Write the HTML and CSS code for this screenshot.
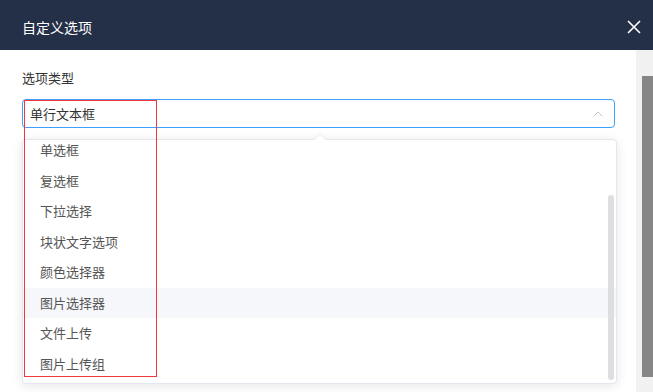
FILE: index.html
```html
<html>
<head>
    <link rel="stylesheet" href="styles.css">
</head>
<body>

<div class="dialog">
    <div class="dialog-head">
        <span class="dialog-title">自定义选项</span>
        <svg class="close" width="14" height="14" viewBox="0 0 14 14">
            <path d="M1 1 L13 13 M13 1 L1 13" stroke="#fff" stroke-width="1.6" fill="none"/>
        </svg>
    </div>

    <div class="dialog-main">
        <div class="dialog-body">
            <div class="field-label">选项类型</div>

            <div class="select-wrap">
                <div class="select">
                    <span class="select-value">单行文本框</span>
                    <svg class="select-arrow" width="10" height="6" viewBox="0 0 10 6">
                        <path d="M0.5 5.5 L5 1 L9.5 5.5" stroke="#c0c4cc" stroke-width="1" fill="none"/>
                    </svg>
                </div>

                <div class="dropdown">
                    <div class="dropdown-arrow"></div>
                    <ul class="options" id="options">
                        <li>单选框</li>
                        <li>复选框</li>
                        <li>下拉选择</li>
                        <li>块状文字选项</li>
                        <li>颜色选择器</li>
                        <li class="hover">图片选择器</li>
                        <li>文件上传</li>
                        <li>图片上传组</li>
                    </ul>
                    <div class="dropdown-thumb"></div>
                </div>

                <div class="mark"></div>
            </div>
        </div>

        <div class="page-scroll">
            <div class="page-thumb"></div>
        </div>
    </div>
</div>

<script>
    document.getElementById("options").scrollTop = 11;
</script>

</body>
</html>
```

FILE: styles.css
```css
body{
    margin: 0;
    font-family: "Noto Sans CJK SC", "Noto Sans", sans-serif;
    background-color: #fff;
}
.dialog{
    width: 653px;
    height: 392px;
    overflow: hidden;
}
.dialog-head{
    height: 50px;
    box-sizing: border-box;
    padding: 3px 12px 0 22px;
    background-color: #242f48;
    display: flex;
    align-items: center;
    justify-content: space-between;
}
.dialog-title{
    color: #fff;
    font-size: 14px;
}
.close{
    margin-top: 1px;
}
.dialog-main{
    display: flex;
    height: 342px;
}
.dialog-body{
    flex: 1;
    padding: 18px 21px 0 22px;
}
.field-label{
    font-size: 13px;
    line-height: 20px;
    color: #333;
    margin-bottom: 11px;
}
.select-wrap{
    position: relative;
}
.select{
    height: 29px;
    box-sizing: border-box;
    border: 1px solid #409eff;
    border-radius: 4px;
    padding: 0 11px 0 7px;
    display: flex;
    align-items: center;
    justify-content: space-between;
}
.select-value{
    font-size: 13px;
    color: #333;
}
.dropdown{
    position: absolute;
    top: 40px;
    left: 0;
    right: -2px;
    height: 245px;
    box-sizing: border-box;
    border: 1px solid #e4e7ed;
    border-radius: 4px;
    background-color: #fff;
    box-shadow: 0 2px 12px rgba(0,0,0,0.1);
}
.dropdown-arrow{
    position: absolute;
    top: -7px;
    left: 50%;
    margin-left: -6px;
    width: 0;
    height: 0;
    border-left: 6px solid transparent;
    border-right: 6px solid transparent;
    border-bottom: 6px solid #e4e7ed;
}
.dropdown-arrow:after{
    content: "";
    position: absolute;
    top: 1px;
    left: -6px;
    border-left: 6px solid transparent;
    border-right: 6px solid transparent;
    border-bottom: 6px solid #fff;
}
.options{
    list-style-type: none;
    margin: 0;
    padding: 6px 0;
    height: 243px;
    box-sizing: border-box;
    overflow: hidden;
}
.options li{
    height: 30.5px;
    line-height: 30.5px;
    padding: 0 17px;
    font-size: 13px;
    color: #555;
}
.options li.hover{
    background-color: #f5f7fa;
}
.dropdown-thumb{
    position: absolute;
    right: 2px;
    top: 55px;
    width: 6px;
    height: 185px;
    border-radius: 3px;
    background-color: #dddee0;
}
.mark{
    position: absolute;
    top: 1px;
    left: 2px;
    width: 133px;
    height: 277px;
    box-sizing: border-box;
    border: 1px solid #f2383a;
}
.page-scroll{
    width: 17px;
    background-color: #f1f1f1;
    padding-top: 26px;
    box-sizing: border-box;
}
.page-thumb{
    margin-left: 6px;
    width: 11px;
    height: 301px;
    background-color: #868686;
}
```
